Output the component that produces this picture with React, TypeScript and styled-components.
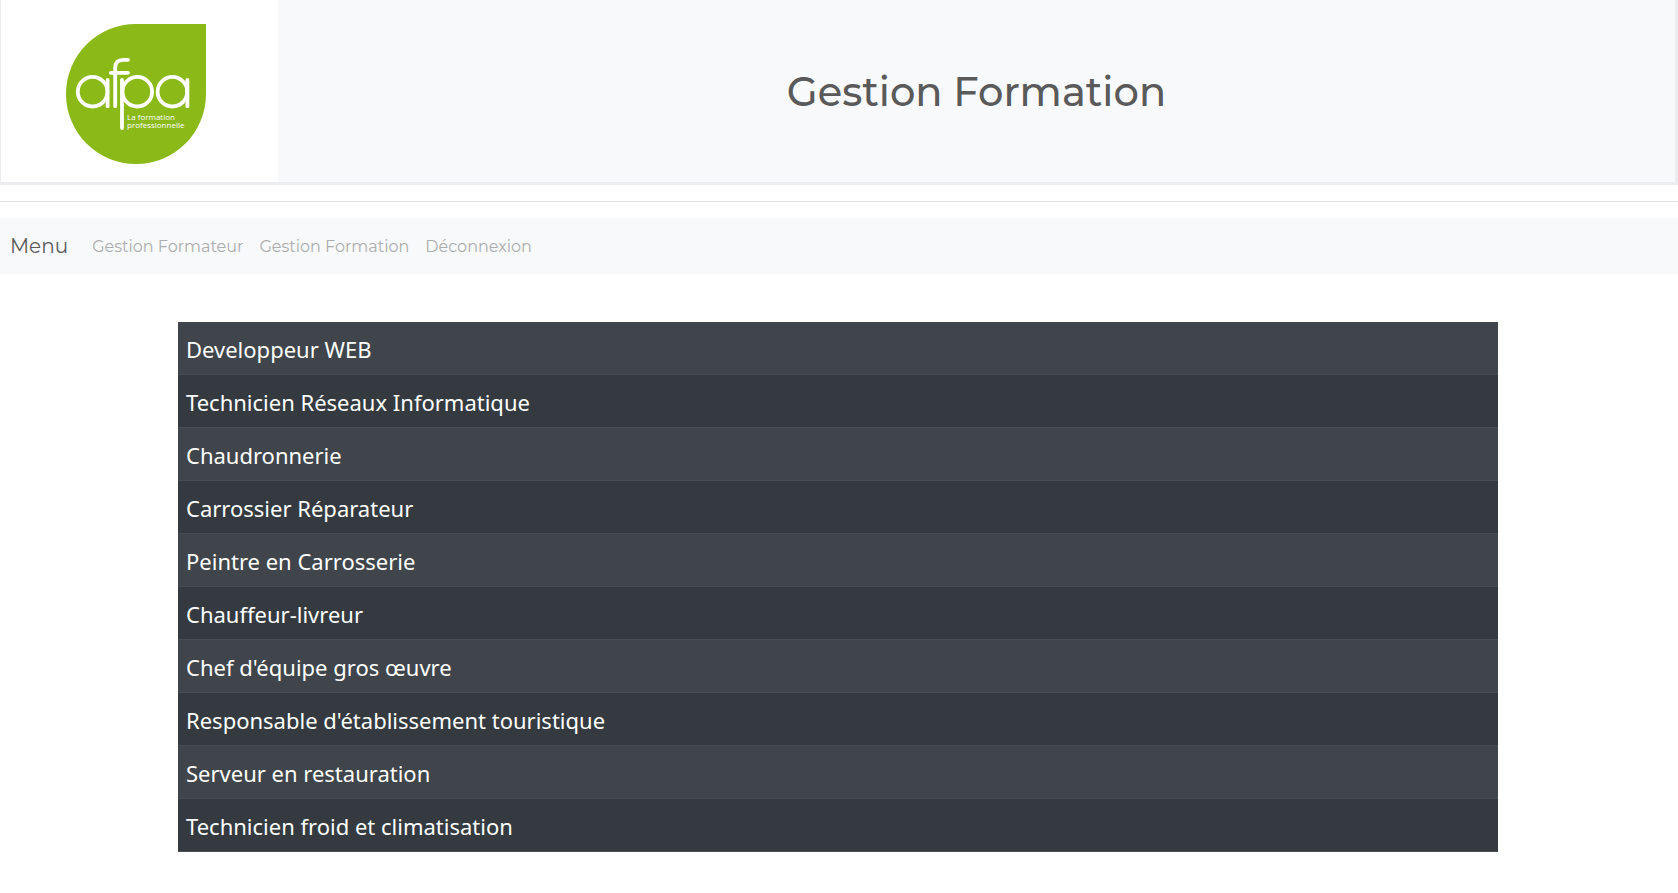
import React from "react";
import styled, { createGlobalStyle } from "styled-components";

const GlobalStyle = createGlobalStyle`
  *, *::before, *::after { box-sizing: border-box; }
  body {
    margin: 0;
    background: #fff;
    font-family: Montserrat, Inter, "Liberation Sans", sans-serif;
    font-size: 16px;
    line-height: 24px;
  }
`;

const Header = styled.header`
  display: flex;
  background: #f8f9fb;
  border: solid #ecedf0;
  border-width: 0 3px 3px 1px;
`;

const LogoPanel = styled.div`
  flex: none;
  padding: 24px 72px 18px 65px;
  background: #fff;
`;

const LogoDrawing = styled.svg`
  display: block;
  width: 140px;
  height: 140px;
`;

const Tagline = styled.text`
  font-family: "Open Sans", sans-serif;
  font-size: 8px;
  fill: #fff;
`;

const Title = styled.h1`
  flex: 1;
  align-self: center;
  margin: 0;
  padding-top: 2px;
  color: #5a5a5a;
  font-size: 40px;
  font-weight: 500;
  line-height: 48px;
  text-align: center;
`;

const Divider = styled.hr`
  height: 1px;
  margin: 16px 0;
  border: 0;
  background: #dfdfdf;
`;

const Navbar = styled.nav`
  display: flex;
  align-items: center;
  padding: 8px;
  background: #f8f9fb;
`;

const Brand = styled.a`
  padding: 4px 16px 4px 2px;
  color: #5a5a5a;
  font-size: 20px;
  font-weight: 400;
  line-height: 32px;
  text-decoration: none;
`;

const NavList = styled.ul`
  display: flex;
  margin: 0;
  padding: 0;
  list-style: none;
`;

const NavLink = styled.a`
  display: block;
  padding: 9px 8px 7px;
  color: #acadae;
  font-size: 16px;
  font-weight: 400;
  text-decoration: none;
`;

const Main = styled.main`
  padding: 48px 180px 40px 178px;
`;

const Table = styled.table`
  width: 100%;
  border-collapse: separate;
  border-spacing: 0;
  background: #343a40;
  color: #fff;
  font-family: "Segoe UI", "Noto Sans", sans-serif;
  font-size: 22px;
  line-height: 36px;
`;

const Row = styled.tr`
  &:nth-child(odd) { background: #3f454b; }
`;

const Cell = styled.td`
  padding: 9px 8px 7px;
  border-bottom: 1px solid #484d55;
`;

const links = ["Gestion Formateur", "Gestion Formation", "Déconnexion"];

const courses = [
  "Developpeur WEB",
  "Technicien Réseaux Informatique",
  "Chaudronnerie",
  "Carrossier Réparateur",
  "Peintre en Carrosserie",
  "Chauffeur-livreur",
  "Chef d'équipe gros œuvre",
  "Responsable d'établissement touristique",
  "Serveur en restauration",
  "Technicien froid et climatisation",
];

function Logo() {
  return (
    <LogoDrawing viewBox="66 24 140 140" role="img" aria-label="afpa">
      <path d="M136 24H206V94A70 70 0 1 1 136 24Z" fill="#8ab918" />
      <g fill="none" stroke="#fff" strokeWidth="3.8" strokeLinecap="round">
        <circle cx="92.6" cy="91.7" r="14.8" />
        <path d="M107.6 80V106.2" />
        <path d="M115.2 106.2V68Q115.2 59.8 123 59.8H128M110.8 72.8H128" />
        <path d="M122 80V128" />
        <circle cx="137.3" cy="91.7" r="14.8" />
        <circle cx="172.4" cy="91.7" r="14.8" />
        <path d="M187.4 80V106.2" />
      </g>
      <Tagline x="127" y="119.6">La formation</Tagline>
      <Tagline x="127" y="127.8">professionnelle</Tagline>
    </LogoDrawing>
  );
}

export default function App() {
  return (
    <>
      <GlobalStyle />
      <Header>
        <LogoPanel>
          <Logo />
        </LogoPanel>
        <Title>Gestion Formation</Title>
      </Header>
      <Divider />
      <Navbar>
        <Brand href="#">Menu</Brand>
        <NavList>
          {links.map((label) => (
            <li key={label}>
              <NavLink href="#">{label}</NavLink>
            </li>
          ))}
        </NavList>
      </Navbar>
      <Main>
        <Table>
          <tbody>
            {courses.map((course) => (
              <Row key={course}>
                <Cell>{course}</Cell>
              </Row>
            ))}
          </tbody>
        </Table>
      </Main>
    </>
  );
}
